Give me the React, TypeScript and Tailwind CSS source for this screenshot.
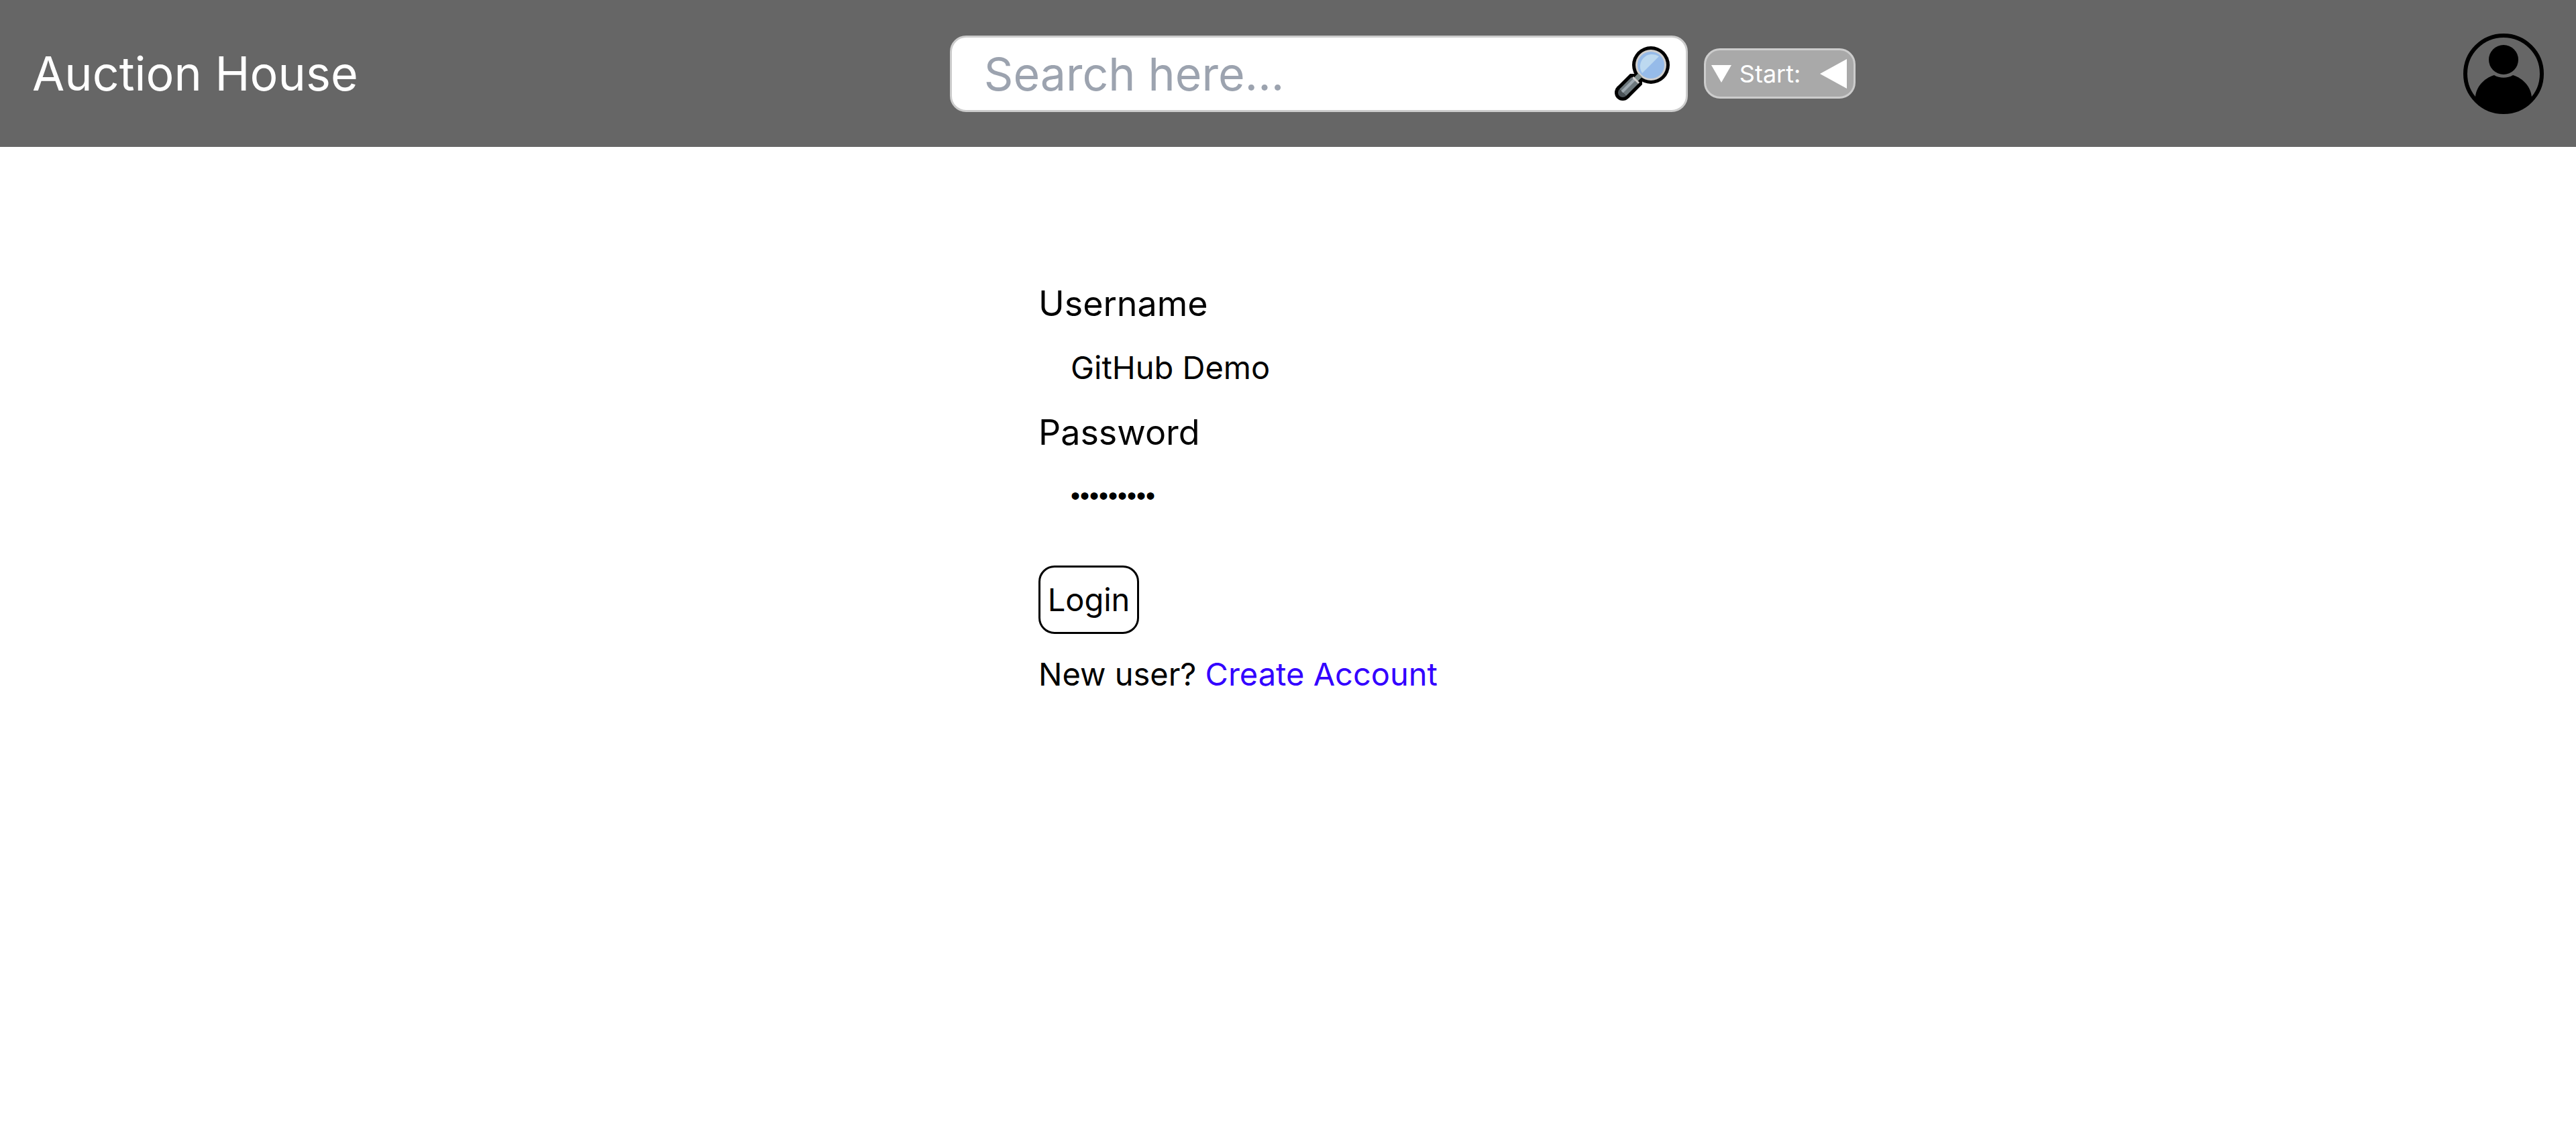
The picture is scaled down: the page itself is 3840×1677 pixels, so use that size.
import { useState } from "react";

function MagnifierIcon() {
  return (
    <svg viewBox="0 0 82 82" className="h-[82px] w-[82px]" aria-hidden="true">
      <circle cx="12" cy="69" r="12" />
      <path d="M3 61 L23 41 H31 L41 51 V57 L21 77 Z" />
      <circle cx="54" cy="28" r="28" />
      <circle cx="54" cy="28" r="23" fill="#d0cfce" />
      <circle cx="54" cy="28" r="20" fill="#96bbe9" />
      <path d="M41 40 A18 18 0 0 1 66 15 Z" fill="#bdd9f0" />
      <path d="M30 51 L38 43" stroke="#7d8a88" strokeWidth="8" />
      <path d="M12 69 L30 51" stroke="#6d787d" strokeWidth="14" />
      <path d="M7 64 L17 74 A7 7 0 0 1 7 64 Z" fill="#4a5257" />
      <path d="M11 68 L30 49" stroke="#9ea9b1" strokeWidth="4" />
      <path d="M27 46 L36 55" stroke="#d0cfce" strokeWidth="3" />
    </svg>
  );
}

function AccountIcon() {
  return (
    <svg viewBox="0 0 120 120" className="h-[120px] w-[120px]" aria-hidden="true">
      <circle cx="60" cy="60" r="57" fill="none" stroke="#000" strokeWidth="6" />
      <circle cx="60" cy="39" r="22" />
      <path d="M46 62 C54 67 66 67 74 62 C90 67 101 80 102 95 A54 54 0 0 1 60 118 A54 54 0 0 1 18 95 C19 80 30 67 46 62 Z" />
    </svg>
  );
}

export default function App() {
  const [query, setQuery] = useState("");
  const [username, setUsername] = useState("GitHub Demo");
  const [password, setPassword] = useState("demo12345");

  return (
    <div className="min-h-screen bg-white font-['Inter',sans-serif] text-[47px] leading-[72px] text-black">
      <header className="flex h-[219px] items-center justify-between bg-[#666] px-12">
        <a href="#home" className="text-[70px] leading-[108px] text-white">Auction House</a>
        <div className="mr-6 flex items-center gap-6">
          <form
            className="flex h-[114px] w-[1100px] items-center rounded-[24px] border-[3px] border-[#ccc] bg-white pr-6 pl-12"
            onSubmit={(e) => e.preventDefault()}
          >
            <input
              type="text"
              aria-label="Search"
              placeholder="Search here..."
              value={query}
              onChange={(e) => setQuery(e.target.value)}
              className="min-w-0 flex-1 bg-transparent text-[68px] leading-[108px] outline-none placeholder:text-[#9ca3af]"
            />
            <button type="submit" aria-label="Submit search">
              <MagnifierIcon />
            </button>
          </form>
          <button
            type="button"
            className="flex h-[75px] w-[226px] items-center justify-between rounded-[24px] border-[3px] border-[#ccc] bg-[#a9a9a9] pr-[10px] pl-2 text-[36px] leading-[54px] text-white"
          >
            <span className="flex items-center gap-3">
              <svg viewBox="0 0 30 26" className="h-[26px] w-[30px]" fill="currentColor" aria-hidden="true">
                <path d="M0 0H30L15 26Z" />
              </svg>
              Start:
            </span>
            <svg viewBox="0 0 40 44" className="h-11 w-10" fill="currentColor" aria-hidden="true">
              <path d="M40 0V44L0 22Z" />
            </svg>
          </button>
        </div>
        <a href="#account" aria-label="Account">
          <AccountIcon />
        </a>
      </header>

      <main className="mx-auto w-full max-w-[744px] pt-[192px]">
        <form className="flex flex-col items-start" onSubmit={(e) => e.preventDefault()}>
          <label htmlFor="username" className="h-24 text-[52px] leading-[84px]">Username</label>
          <input
            id="username"
            type="text"
            value={username}
            onChange={(e) => setUsername(e.target.value)}
            className="h-24 w-full px-12 pb-4 outline-none"
          />
          <label htmlFor="password" className="h-24 text-[52px] leading-[84px]">Password</label>
          <input
            id="password"
            type="password"
            value={password}
            onChange={(e) => setPassword(e.target.value)}
            className="h-24 w-full px-12 pb-4 font-['Liberation_Sans',sans-serif] text-[40px] outline-none"
          />
          <button type="submit" className="mt-12 w-[150px] rounded-[24px] border-[3px] border-black py-3">Login</button>
        </form>
        <p className="mt-6">
          New user? <a href="#create-account" className="text-[#3300ff]">Create Account</a>
        </p>
      </main>
    </div>
  );
}
